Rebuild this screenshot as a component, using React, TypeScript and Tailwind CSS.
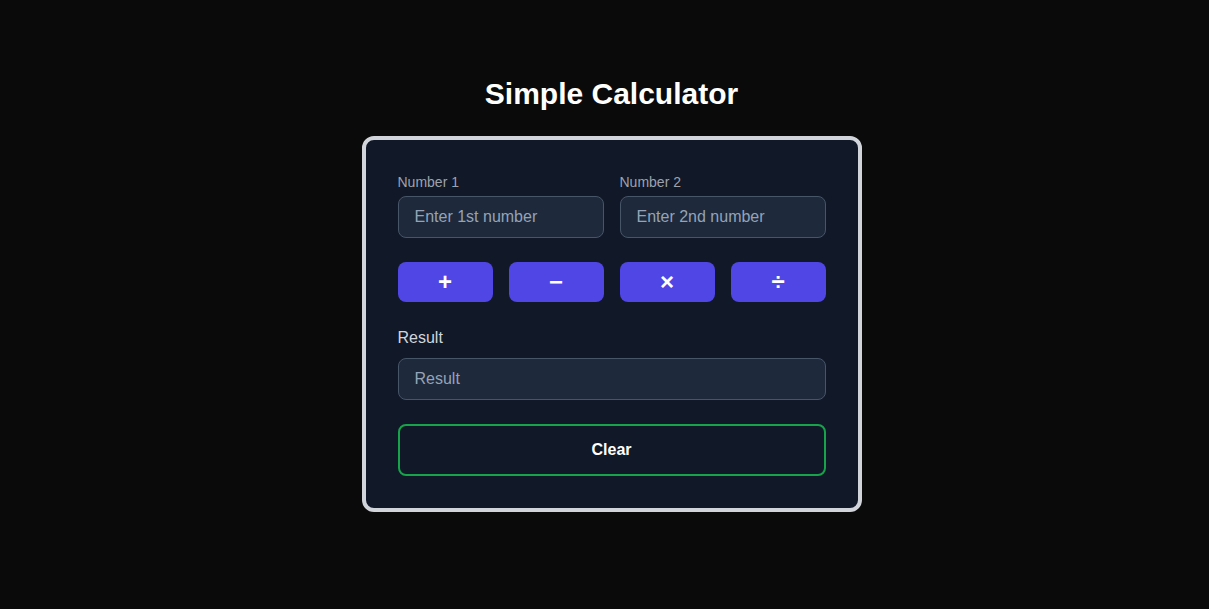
import React, { useState } from "react";

export default function App() {
  const [a, setA] = useState("");
  const [b, setB] = useState("");
  const [result, setResult] = useState("");

  const calc = (op: string) => {
    const x = parseFloat(a);
    const y = parseFloat(b);
    if (isNaN(x) || isNaN(y)) return;
    let r = 0;
    if (op === "+") r = x + y;
    if (op === "-") r = x - y;
    if (op === "*") r = x * y;
    if (op === "/") r = x / y;
    setResult(String(r));
  };

  const ops = [
    { k: "+", s: "+" },
    { k: "-", s: "−" },
    { k: "*", s: "×" },
    { k: "/", s: "÷" },
  ];

  return (
    <div
      className="min-h-screen bg-[#0a0a0a] flex flex-col items-center pt-[76px] pl-[14px]"
      style={{ fontFamily: '"Liberation Sans", Arial, sans-serif' }}
    >
      <h1 className="text-3xl font-bold text-white mb-6 leading-9">Simple Calculator</h1>
      <div className="w-[500px] bg-[#111827] border-4 border-[#d1d5db] rounded-xl p-8">
        <div className="grid grid-cols-2 gap-4">
          <div>
            <label className="block text-sm text-[#9ca3af] mb-1">Number 1</label>
            <input
              value={a}
              onChange={(e) => setA(e.target.value)}
              placeholder="Enter 1st number"
              className="w-full bg-[#1e293b] border border-[#475569] rounded-lg px-4 py-2 text-base text-white placeholder-[#94a3b8] outline-none"
            />
          </div>
          <div>
            <label className="block text-sm text-[#9ca3af] mb-1">Number 2</label>
            <input
              value={b}
              onChange={(e) => setB(e.target.value)}
              placeholder="Enter 2nd number"
              className="w-full bg-[#1e293b] border border-[#475569] rounded-lg px-4 py-2 text-base text-white placeholder-[#94a3b8] outline-none"
            />
          </div>
        </div>
        <div className="grid grid-cols-4 gap-4 mt-6">
          {ops.map((o) => (
            <button
              key={o.k}
              onClick={() => calc(o.k)}
              className="h-10 bg-[#4f46e5] rounded-lg text-white text-2xl leading-none font-bold flex items-center justify-center"
            >
              {o.s}
            </button>
          ))}
        </div>
        <label className="block text-base text-[#d1d5db] mt-6 mb-2">Result</label>
        <input
          value={result}
          readOnly
          placeholder="Result"
          className="w-full bg-[#1e293b] border border-[#475569] rounded-lg px-4 py-2 text-base text-white placeholder-[#94a3b8] outline-none"
        />
        <button
          onClick={() => {
            setA("");
            setB("");
            setResult("");
          }}
          className="w-full mt-6 py-3 border-2 border-[#16a34a] rounded-lg text-white font-bold text-base"
        >
          Clear
        </button>
      </div>
    </div>
  );
}
